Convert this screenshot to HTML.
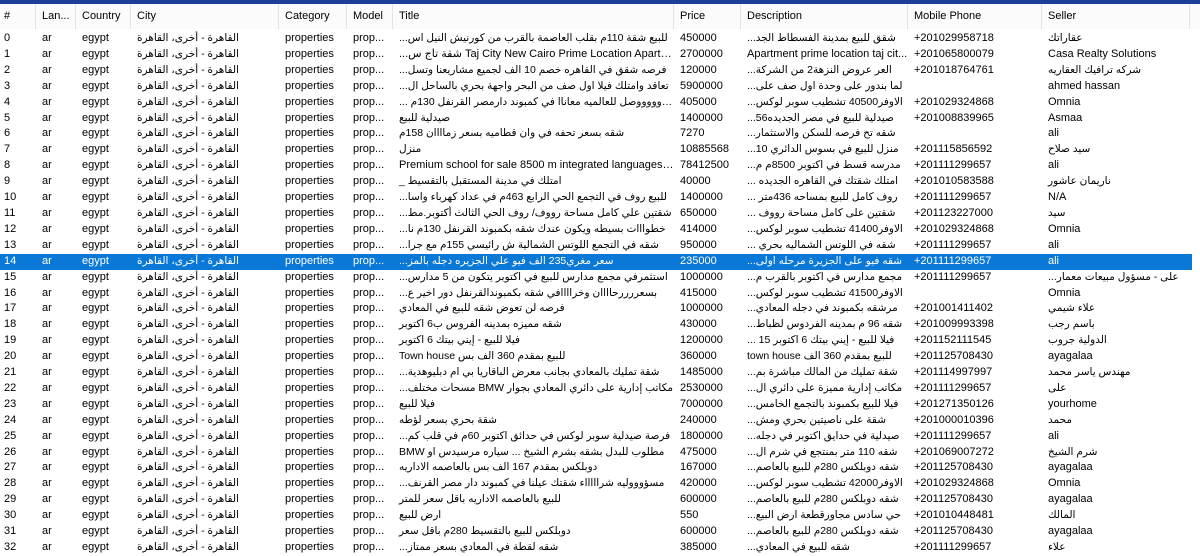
<!DOCTYPE html>
<html><head><meta charset="utf-8">
<style>
html,body{margin:0;padding:0;width:1200px;height:545px;overflow:hidden;background:#fff;}
body{font-family:"Liberation Sans","DejaVu Sans",sans-serif;font-size:11px;color:#000;}
.top{position:absolute;left:0;top:0;width:1200px;height:4px;background:#1c3d98;}
.hdr{position:absolute;left:0;top:4px;width:1200px;height:25px;background:#fbfbfb;}
.hdr div{position:absolute;top:0;height:25px;line-height:25px;padding-left:6px;box-sizing:border-box;border-right:1px solid #e3e3e3;color:#000;}
table{position:absolute;left:0;top:31px;border-collapse:collapse;table-layout:fixed;width:1192px;}
td{height:15.9px;padding:0 0 0 6px;white-space:nowrap;overflow:hidden;text-overflow:ellipsis;line-height:15.9px;box-sizing:border-box;}
td:first-child{padding-left:4px;}
tr.sel td{background:#0a78d7;color:#fff;}
.ar{font-size:10.5px;}
</style></head><body>
<div class="top"></div>
<div class="hdr">
<div style="left:0;width:36px;padding-left:4px">#</div>
<div style="left:36px;width:40px">Lan...</div>
<div style="left:76px;width:55px">Country</div>
<div style="left:131px;width:148px">City</div>
<div style="left:279px;width:68px">Category</div>
<div style="left:347px;width:46px">Model</div>
<div style="left:393px;width:281px">Title</div>
<div style="left:674px;width:67px">Price</div>
<div style="left:741px;width:167px">Description</div>
<div style="left:908px;width:134px">Mobile Phone</div>
<div style="left:1042px;width:148px">Seller</div>
</div>
<table>
<colgroup><col style="width:36px"><col style="width:40px"><col style="width:55px"><col style="width:148px"><col style="width:68px"><col style="width:46px"><col style="width:281px"><col style="width:67px"><col style="width:167px"><col style="width:134px"><col style="width:150px"></colgroup>
<tr><td>0</td><td>ar</td><td>egypt</td><td class="ar">القاهرة - أخرى، القاهرة</td><td>properties</td><td>prop...</td><td class="ar">...للبيع شقة 110م بقلب العاصمة بالقرب من كورنيش النيل اس</td><td>450000</td><td class="ar">...شقق للبيع بمدينة الفسطاط الجد</td><td>+201029958718</td><td class="ar">عقاراتك</td></tr>
<tr><td>1</td><td>ar</td><td>egypt</td><td class="ar">القاهرة - أخرى، القاهرة</td><td>properties</td><td>prop...</td><td>...شقة تاج س Taj City New Cairo Prime Location Apartment</td><td>2700000</td><td>Apartment prime location taj cit...</td><td>+201065800079</td><td>Casa Realty Solutions</td></tr>
<tr><td>2</td><td>ar</td><td>egypt</td><td class="ar">القاهرة - أخرى، القاهرة</td><td>properties</td><td>prop...</td><td class="ar">...فرصه شقق في القاهره خصم 10 الف لجميع مشاريعنا وتسل</td><td>120000</td><td class="ar">...العر عروض النزهة2 من الشركة</td><td>+201018764761</td><td class="ar">شركه ترافيك العقاريه</td></tr>
<tr><td>3</td><td>ar</td><td>egypt</td><td class="ar">القاهرة - أخرى، القاهرة</td><td>properties</td><td>prop...</td><td class="ar">...تعاقد وامتلك فيلا اول صف من البحر واجهة بحري بالساحل ال</td><td>5900000</td><td class="ar">...لما بندور على وحدة اول صف على</td><td></td><td>ahmed hassan</td></tr>
<tr><td>4</td><td>ar</td><td>egypt</td><td class="ar">القاهرة - أخرى، القاهرة</td><td>properties</td><td>prop...</td><td class="ar">... اوووووووصل للعالميه معاناا في كمبوند دارمصر القرنفل 130م</td><td>405000</td><td class="ar">...الاوفر40500 تشطيب سوبر لوكس</td><td>+201029324868</td><td>Omnia</td></tr>
<tr><td>5</td><td>ar</td><td>egypt</td><td class="ar">القاهرة - أخرى، القاهرة</td><td>properties</td><td>prop...</td><td class="ar">صيدلية للبيع</td><td>1400000</td><td class="ar">...56صيدلية للبيع في مصر الجديده</td><td>+201008839965</td><td>Asmaa</td></tr>
<tr><td>6</td><td>ar</td><td>egypt</td><td class="ar">القاهرة - أخرى، القاهرة</td><td>properties</td><td>prop...</td><td class="ar">شقه بسعر تحفه في وان قطاميه بسعر زماااان 158م</td><td>7270</td><td class="ar">...شقه تح فرصه للسكن والاستثمار</td><td></td><td>ali</td></tr>
<tr><td>7</td><td>ar</td><td>egypt</td><td class="ar">القاهرة - أخرى، القاهرة</td><td>properties</td><td>prop...</td><td class="ar">منزل</td><td>10885568</td><td class="ar">...منزل للبيع في بسوس الدائري 10</td><td>+201115856592</td><td class="ar">سيد صلاح</td></tr>
<tr><td>8</td><td>ar</td><td>egypt</td><td class="ar">القاهرة - أخرى، القاهرة</td><td>properties</td><td>prop...</td><td>Premium school for sale 8500 m integrated languages in ...</td><td>78412500</td><td class="ar">...مدرسه قسط في اكتوبر 8500م م</td><td>+201111299657</td><td>ali</td></tr>
<tr><td>9</td><td>ar</td><td>egypt</td><td class="ar">القاهرة - أخرى، القاهرة</td><td>properties</td><td>prop...</td><td class="ar">_ امتلك في مدينة المستقبل بالتقسيط</td><td>40000</td><td class="ar">... امتلك شقتك في القاهره الجديده</td><td>+201010583588</td><td class="ar">ناريمان عاشور</td></tr>
<tr><td>10</td><td>ar</td><td>egypt</td><td class="ar">القاهرة - أخرى، القاهرة</td><td>properties</td><td>prop...</td><td class="ar">...للبيع روف في التجمع الحي الرابع 463م في عداد كهرباء واسا</td><td>1400000</td><td class="ar">... روف كامل للبيع بمساحه 436متر</td><td>+201111299657</td><td>N/A</td></tr>
<tr><td>11</td><td>ar</td><td>egypt</td><td class="ar">القاهرة - أخرى، القاهرة</td><td>properties</td><td>prop...</td><td class="ar">...شقتين علي كامل مساحة رووف/ روف الحي الثالث أكتوبر.مط</td><td>650000</td><td class="ar">... شقتين على كامل مساحة رووف</td><td>+201123227000</td><td class="ar">سيد</td></tr>
<tr><td>12</td><td>ar</td><td>egypt</td><td class="ar">القاهرة - أخرى، القاهرة</td><td>properties</td><td>prop...</td><td class="ar">...خطوااات بسيطه ويكون عندك شقه بكمبوند القرنفل 130م نا</td><td>414000</td><td class="ar">...الاوفر41400 تشطيب سوبر لوكس</td><td>+201029324868</td><td>Omnia</td></tr>
<tr><td>13</td><td>ar</td><td>egypt</td><td class="ar">القاهرة - أخرى، القاهرة</td><td>properties</td><td>prop...</td><td class="ar">...شقه في التجمع اللوتس الشمالية ش رائيسي 155م مع جرا</td><td>950000</td><td class="ar">... شقه في اللوتس الشماليه بحري</td><td>+201111299657</td><td>ali</td></tr>
<tr class="sel"><td>14</td><td>ar</td><td>egypt</td><td class="ar">القاهرة - أخرى، القاهرة</td><td>properties</td><td>prop...</td><td class="ar">...سعر مغري235 الف فيو علي الجزيره دجله بالمز</td><td>235000</td><td class="ar">...شقه فيو على الجزيرة مرحله اولى</td><td>+201111299657</td><td>ali</td></tr>
<tr><td>15</td><td>ar</td><td>egypt</td><td class="ar">القاهرة - أخرى، القاهرة</td><td>properties</td><td>prop...</td><td class="ar">...استثمرفي مجمع مدارس للبيع في اكتوبر يتكون من 5 مدارس</td><td>1000000</td><td class="ar">...مجمع مدارس في اكتوبر بالقرب م</td><td>+201111299657</td><td class="ar">...على - مسؤول مبيعات معمار</td></tr>
<tr><td>16</td><td>ar</td><td>egypt</td><td class="ar">القاهرة - أخرى، القاهرة</td><td>properties</td><td>prop...</td><td class="ar">...بسعررررحاااان وخراااافي شقه بكمبوندالقرنفل دور اخير ع</td><td>415000</td><td class="ar">...الاوفر41500 تشطيب سوبر لوكس</td><td></td><td>Omnia</td></tr>
<tr><td>17</td><td>ar</td><td>egypt</td><td class="ar">القاهرة - أخرى، القاهرة</td><td>properties</td><td>prop...</td><td class="ar">فرصه لن تعوض شقه للبيع في المعادي</td><td>1000000</td><td class="ar">...مرشقه بكمبوند في دجله المعادي</td><td>+201001411402</td><td class="ar">علاء شيمي</td></tr>
<tr><td>18</td><td>ar</td><td>egypt</td><td class="ar">القاهرة - أخرى، القاهرة</td><td>properties</td><td>prop...</td><td class="ar">شقه مميزه بمدينه الفروس ب6 اكتوبر</td><td>430000</td><td class="ar">...شقه 96 م بمدينه الفردوس لظباط</td><td>+201009993398</td><td class="ar">باسم رجب</td></tr>
<tr><td>19</td><td>ar</td><td>egypt</td><td class="ar">القاهرة - أخرى، القاهرة</td><td>properties</td><td>prop...</td><td class="ar">فيلا للبيع - إيني بيتك 6 اكتوبر</td><td>1200000</td><td class="ar">... 15 فيلا للبيع - إيني بيتك 6 اكتوبر</td><td>+201152111545</td><td class="ar">الدولية جروب</td></tr>
<tr><td>20</td><td>ar</td><td>egypt</td><td class="ar">القاهرة - أخرى، القاهرة</td><td>properties</td><td>prop...</td><td class="ar">Town house للبيع بمقدم 360 الف بس</td><td>360000</td><td class="ar">town house للبيع بمقدم 360 الف</td><td>+201125708430</td><td>ayagalaa</td></tr>
<tr><td>21</td><td>ar</td><td>egypt</td><td class="ar">القاهرة - أخرى، القاهرة</td><td>properties</td><td>prop...</td><td class="ar">...شقة تمليك بالمعادي بجانب معرض الباقاريا بي ام دبليوهدية</td><td>1485000</td><td class="ar">...شقة تمليك من المالك مباشرة بم</td><td>+201114997997</td><td class="ar">مهندس ياسر محمد</td></tr>
<tr><td>22</td><td>ar</td><td>egypt</td><td class="ar">القاهرة - أخرى، القاهرة</td><td>properties</td><td>prop...</td><td class="ar">...مسحات مختلف BMW مكاتب إدارية على دائري المعادي بجوار</td><td>2530000</td><td class="ar">...مكاتب إدارية مميزة على دائري ال</td><td>+201111299657</td><td class="ar">على</td></tr>
<tr><td>23</td><td>ar</td><td>egypt</td><td class="ar">القاهرة - أخرى، القاهرة</td><td>properties</td><td>prop...</td><td class="ar">فيلا للبيع</td><td>7000000</td><td class="ar">...فيلا للبيع بكمبوند بالتجمع الخامس</td><td>+201271350126</td><td>yourhome</td></tr>
<tr><td>24</td><td>ar</td><td>egypt</td><td class="ar">القاهرة - أخرى، القاهرة</td><td>properties</td><td>prop...</td><td class="ar">شقة بحري بسعر لؤطه</td><td>240000</td><td class="ar">...شقة على ناصيتين بحري ومش</td><td>+201000010396</td><td class="ar">محمد</td></tr>
<tr><td>25</td><td>ar</td><td>egypt</td><td class="ar">القاهرة - أخرى، القاهرة</td><td>properties</td><td>prop...</td><td class="ar">...فرصة صيدلية سوبر لوكس في حدائق اكتوبر 60م في قلب كم</td><td>1800000</td><td class="ar">...صيدلية في حدايق اكتوبر في دجله</td><td>+201111299657</td><td>ali</td></tr>
<tr><td>26</td><td>ar</td><td>egypt</td><td class="ar">القاهرة - أخرى، القاهرة</td><td>properties</td><td>prop...</td><td class="ar">BMW مطلوب للبدل بشقه بشرم الشيخ ... سياره مرسيدس او</td><td>475000</td><td class="ar">...شقه 110 متر بمنتجع في شرم ال</td><td>+201069007272</td><td class="ar">شرم الشيخ</td></tr>
<tr><td>27</td><td>ar</td><td>egypt</td><td class="ar">القاهرة - أخرى، القاهرة</td><td>properties</td><td>prop...</td><td class="ar">دوبلكس بمقدم 167 الف بس بالعاصمه الاداريه</td><td>167000</td><td class="ar">...شقه دوبلكس 280م للبيع بالعاصم</td><td>+201125708430</td><td>ayagalaa</td></tr>
<tr><td>28</td><td>ar</td><td>egypt</td><td class="ar">القاهرة - أخرى، القاهرة</td><td>properties</td><td>prop...</td><td class="ar">...مسؤوووليه شراااااء شقتك عيلنا في كمبوند دار مصر القرنف</td><td>420000</td><td class="ar">...الاوفر42000 تشطيب سوبر لوكس</td><td>+201029324868</td><td>Omnia</td></tr>
<tr><td>29</td><td>ar</td><td>egypt</td><td class="ar">القاهرة - أخرى، القاهرة</td><td>properties</td><td>prop...</td><td class="ar">للبيع بالعاصمه الاداريه باقل سعر للمتر</td><td>600000</td><td class="ar">...شقه دوبلكس 280م للبيع بالعاصم</td><td>+201125708430</td><td>ayagalaa</td></tr>
<tr><td>30</td><td>ar</td><td>egypt</td><td class="ar">القاهرة - أخرى، القاهرة</td><td>properties</td><td>prop...</td><td class="ar">ارض للبيع</td><td>550</td><td class="ar">...حي سادس مجاورقطعة ارض البيع</td><td>+201010448481</td><td class="ar">المالك</td></tr>
<tr><td>31</td><td>ar</td><td>egypt</td><td class="ar">القاهرة - أخرى، القاهرة</td><td>properties</td><td>prop...</td><td class="ar">دوبلكس للبيع بالتقسيط 280م باقل سعر</td><td>600000</td><td class="ar">...شقه دوبلكس 280م للبيع بالعاصم</td><td>+201125708430</td><td>ayagalaa</td></tr>
<tr><td>32</td><td>ar</td><td>egypt</td><td class="ar">القاهرة - أخرى، القاهرة</td><td>properties</td><td>prop...</td><td class="ar">...شقه لقطة في المعادي بسعر ممتاز</td><td>385000</td><td class="ar">...شقه للبيع في المعادي</td><td>+201111299657</td><td class="ar">علاء</td></tr>
</table>
</body></html>
